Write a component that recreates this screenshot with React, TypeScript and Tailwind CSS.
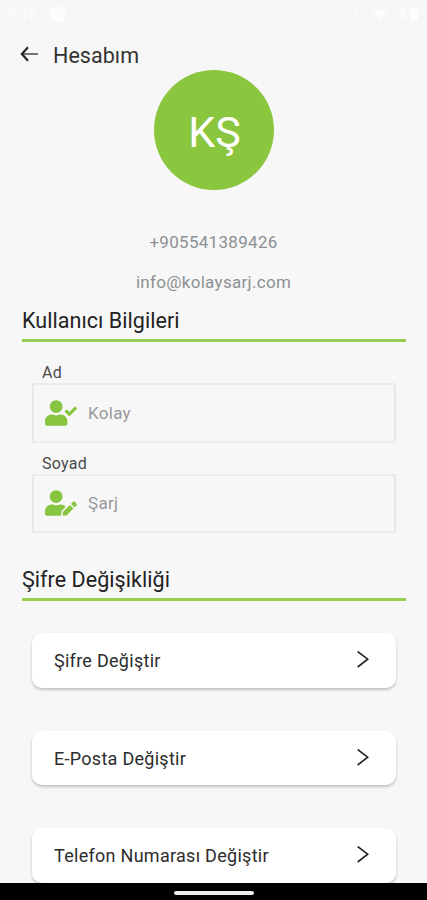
import React from 'react';
import { FaUserCheck, FaUserEdit } from 'react-icons/fa';

const fields = [
  { label: 'Ad', value: 'Kolay', icon: FaUserCheck },
  { label: 'Soyad', value: 'Şarj', icon: FaUserEdit },
];

const actions = ['Şifre Değiştir', 'E-Posta Değiştir', 'Telefon Numarası Değiştir'];

function StatusBar() {
  return (
    <div className="flex h-7 shrink-0 items-center justify-between px-2 text-white opacity-75">
      <div className="flex items-center gap-[11px]">
        <span className="w-[31px] text-[15px] leading-none">9:12</span>
        <svg className="h-4 w-4" viewBox="0 0 16 16">
          <circle cx="8" cy="8" r="8" fill="currentColor" />
          <path d="M5 4l3 4 3 3" stroke="#f7f7f7" strokeWidth="1.2" fill="none" />
        </svg>
      </div>
      <svg className="h-4 w-[70px]" viewBox="0 0 70 16" fill="currentColor">
        <path d="M3 2l6 1-2 4 3 6H4l2-5z" opacity="0.5" />
        <path d="M24 5q7-5 14 0l-7 9z" />
        <path d="M47 13V9l3-2v6zM52 13V5l4-3v11z" opacity="0.8" />
        <path d="M61 3h2V1h4v2h2v11h-8z" />
      </svg>
    </div>
  );
}

function SectionTitle({ title }: { title: string }) {
  return (
    <h2 className="h-[34px] border-b-3 border-[#97cd50] pt-px text-[21.5px] leading-6 tracking-[0.05px] text-[#222]">
      {title}
    </h2>
  );
}

function ActionCard({ label }: { label: string }) {
  return (
    <button className="flex h-[54.5px] w-full shrink-0 items-center justify-between rounded-[10px] bg-white pr-[27px] pl-[22px] text-left shadow-[0_2px_3px_rgba(0,0,0,0.22)]">
      <span className="pt-0.5 text-[18px] leading-6 tracking-[0.28px] text-[#2c2c2c]">{label}</span>
      <svg className="h-[18px] w-3" viewBox="0 0 12 18" fill="none" stroke="#222" strokeWidth="1.6">
        <path d="M0.7 0.5l10 7.7-10 7.8" />
      </svg>
    </button>
  );
}

export default function App() {
  return (
    <div className="flex h-[900px] w-[427px] flex-col overflow-hidden bg-[#f7f7f7] font-['Roboto',sans-serif]">
      <StatusBar />

      <div className="flex min-h-0 flex-1 flex-col overflow-hidden">
        <header className="flex h-[42px] shrink-0 items-center pt-3 pl-5">
          <svg className="mb-[3px] h-4 w-[18px]" viewBox="0 0 18 16" fill="none">
            <path d="M2 8h16" stroke="#666" strokeWidth="1.8" />
            <path d="M8 1.2L1.8 8 8 14.8" stroke="#222" strokeWidth="2.1" />
          </svg>
          <h1 className="ml-[15px] pt-px text-[21.5px] leading-6 tracking-[0.05px] text-[#333]">Hesabım</h1>
        </header>

        <div className="flex shrink-0 flex-col items-center">
          <div className="flex h-[120px] w-[120px] items-center justify-center rounded-full bg-[#8bc63f] pt-1 pl-0.5 text-[43px] text-white">
            KŞ
          </div>
          <p className="mt-10 text-[17px] leading-6 tracking-[0.3px] text-[#8d9093]">+905541389426</p>
          <p className="mt-4 text-[17px] leading-6 tracking-[0.3px] text-[#8d9093]">info@kolaysarj.com</p>
        </div>

        <section className="mt-[14px] pr-[21px] pl-[22px]">
          <SectionTitle title="Kullanıcı Bilgileri" />
          <div className="mt-[21px] px-[10px]">
            {fields.map((field) => {
              const Icon = field.icon;
              return (
                <div key={field.label} className="mb-[11px]">
                  <div className="pl-[10px] text-[16px] leading-5 tracking-[0.3px] text-[#4a4a4a]">{field.label}</div>
                  <div className="flex h-[59.5px] items-center border-2 border-x-[#e8e8e8] border-y-[#ececec] pl-[11px]">
                    <Icon className="h-[26px] w-8 text-[#87c540]" />
                    <span className="ml-[11px] pt-px text-[17px] tracking-[0.3px] text-[#97999c]">{field.value}</span>
                  </div>
                </div>
              );
            })}
          </div>
        </section>

        <section className="mt-[23px] pr-[21px] pl-[22px]">
          <SectionTitle title="Şifre Değişikliği" />
          <div className="mt-8 flex flex-col gap-[43px] px-[10px]">
            {actions.map((label) => (
              <ActionCard key={label} label={label} />
            ))}
          </div>
        </section>
      </div>

      <div className="flex h-[17px] shrink-0 items-center justify-center bg-black">
        <div className="mt-0.5 h-1 w-20 rounded-full bg-[#ededed]" />
      </div>
    </div>
  );
}
